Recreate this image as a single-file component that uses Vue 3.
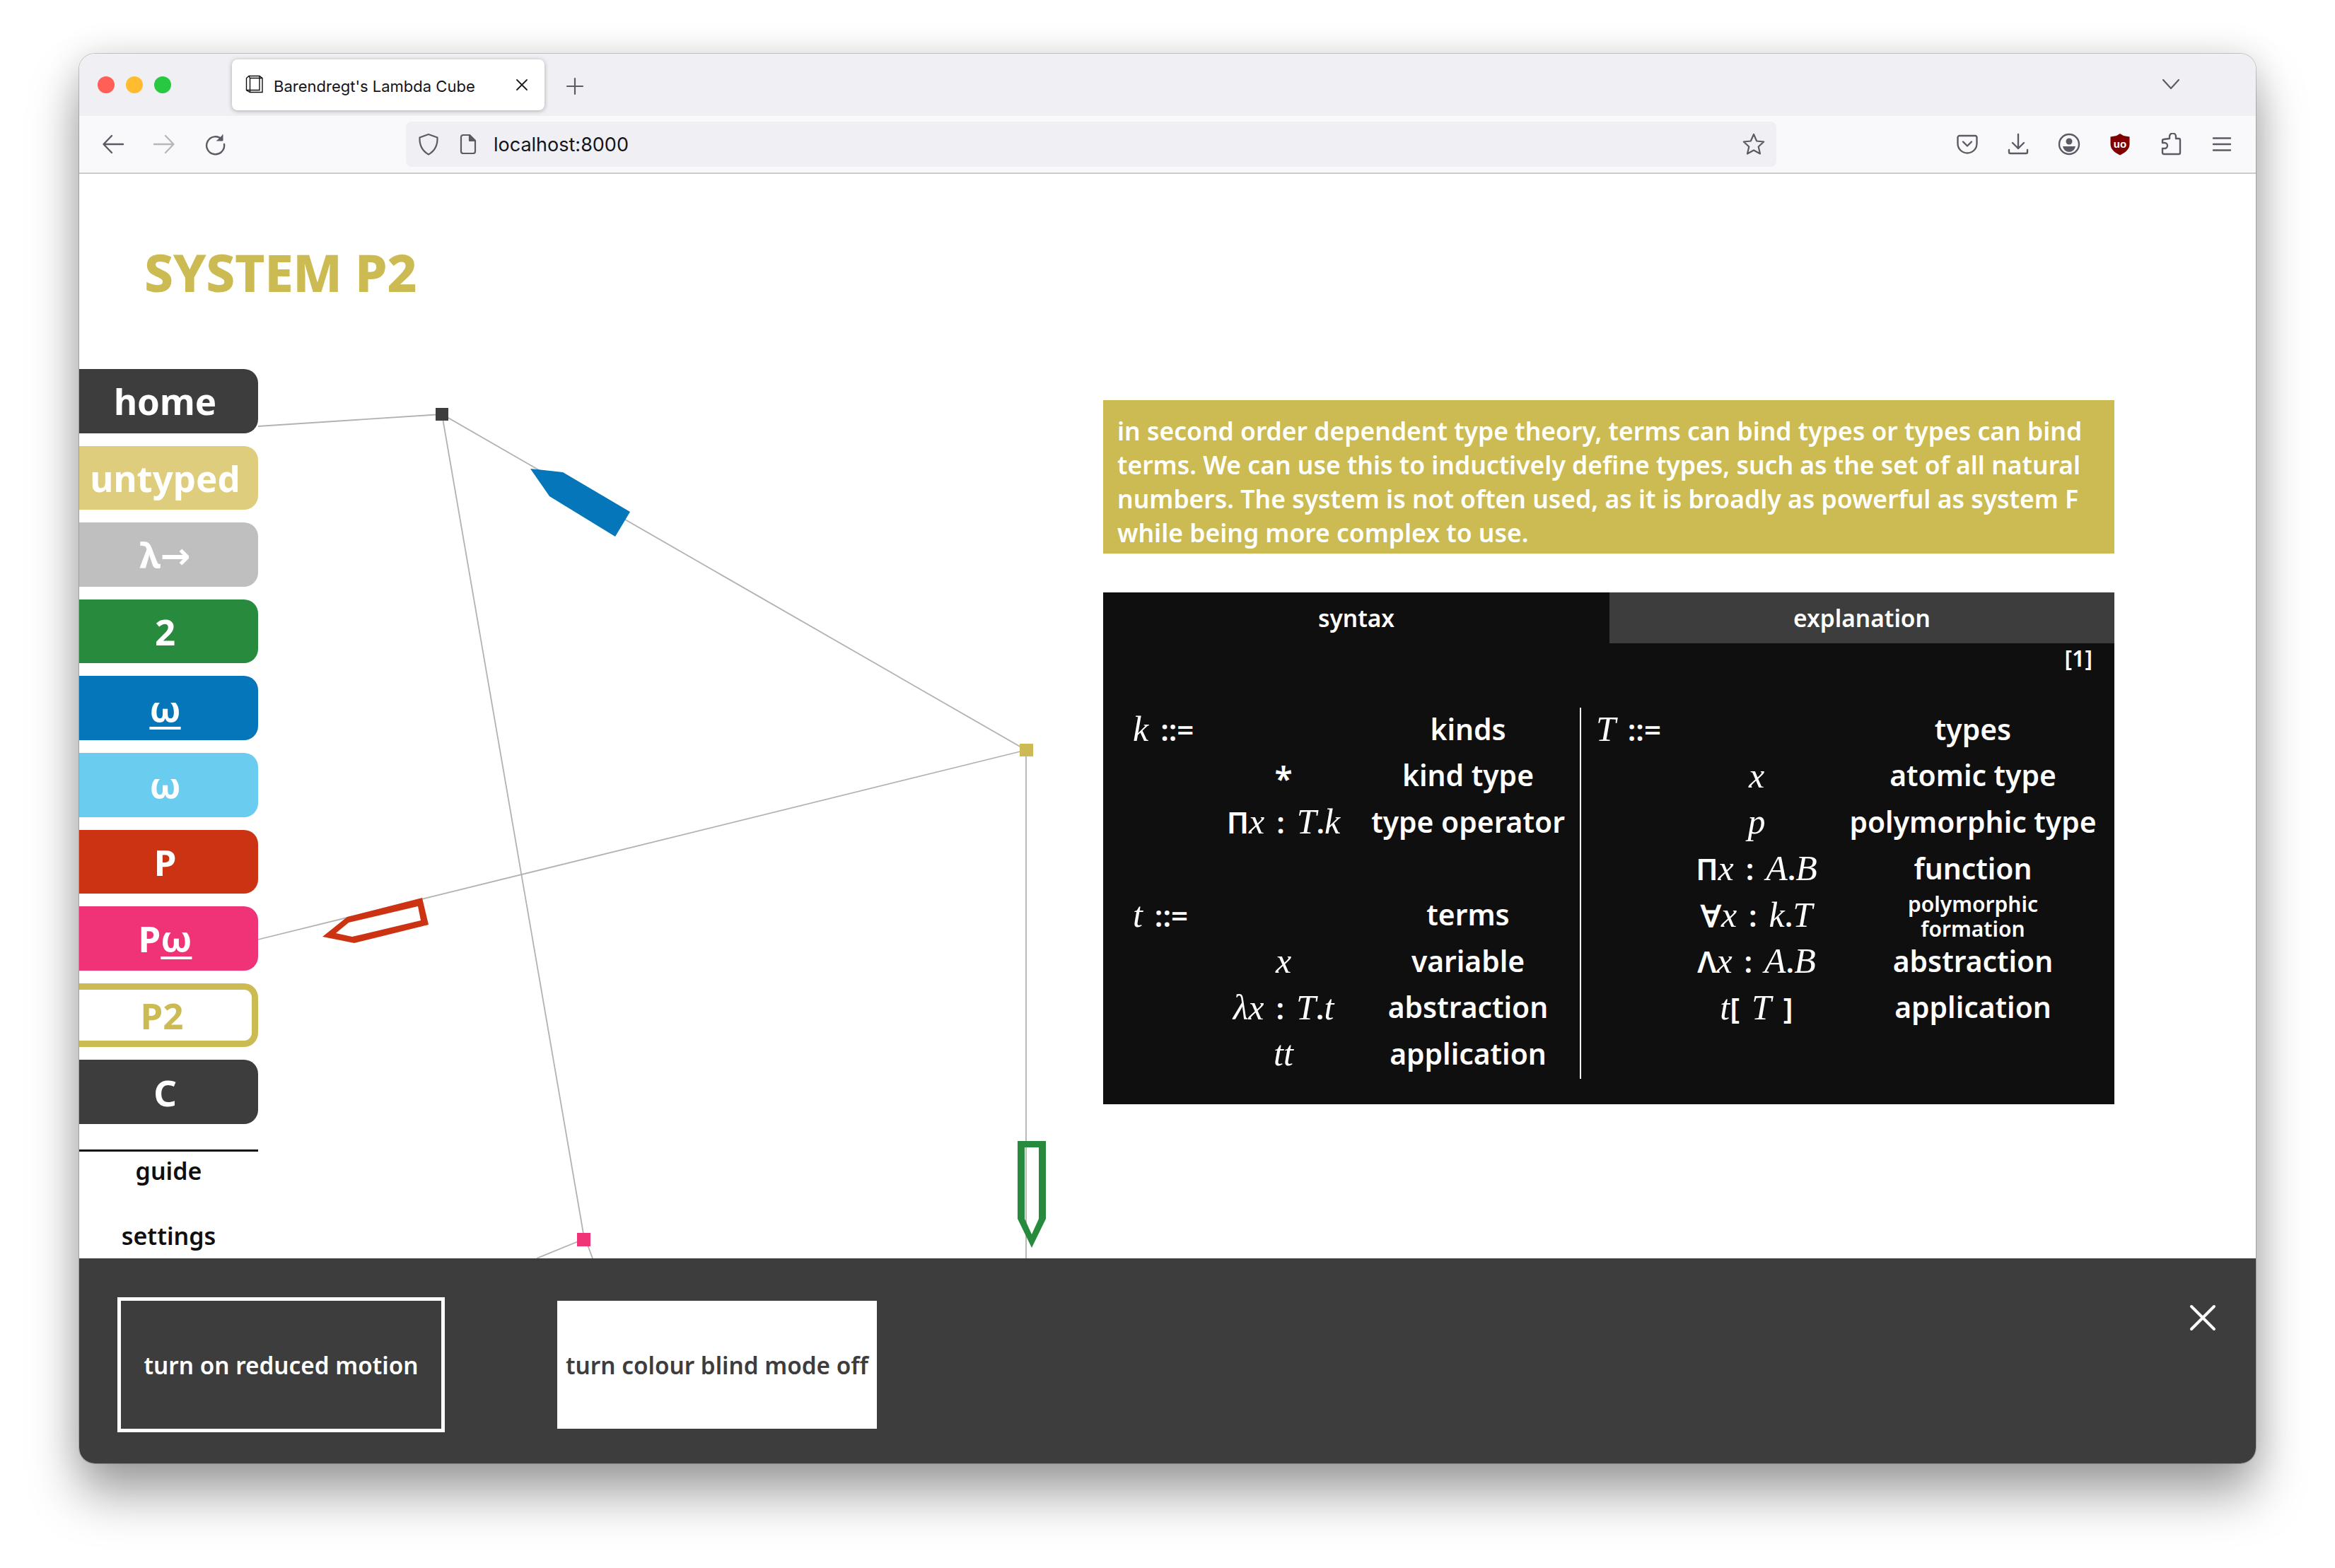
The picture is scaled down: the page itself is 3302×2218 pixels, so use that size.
<script setup>
const nav = [
  { t: 'home', c: 'dark' },
  { t: 'untyped', c: 'sand' },
  { t: 'λ→', c: 'grey' },
  { t: '2', c: 'green' },
  { t: 'ω', c: 'blue', u: true },
  { t: 'ω', c: 'sky' },
  { t: 'P', c: 'red' },
  { p: 'P', t: 'ω', c: 'pink', u: true },
  { t: 'P2', c: 'current' },
  { t: 'C', c: 'dark' },
]
const tok = (s) => s.split('').map((ch) => ({ ch, it: /[a-zA-Zλ]/.test(ch), star: ch === '*' }))
const build = (rows) => rows.map((r) => ({ ...r, a: tok(r[0]), b: tok(r[1]), d: r[2], small: r[3] }))
const left = build([
  ['k ::=', '', 'kinds'],
  ['', '*', 'kind type'],
  ['', 'Πx : T.k', 'type operator'],
  ['', '', ''],
  ['t ::=', '', 'terms'],
  ['', 'x', 'variable'],
  ['', 'λx : T.t', 'abstraction'],
  ['', 'tt', 'application'],
])
const right = build([
  ['T ::=', '', 'types'],
  ['', 'x', 'atomic type'],
  ['', 'p', 'polymorphic type'],
  ['', 'Πx : A.B', 'function'],
  ['', '∀x : k.T', 'polymorphic formation', true],
  ['', 'Λx : A.B', 'abstraction'],
  ['', 't[ T ]', 'application'],
  ['', '', ''],
])
const sections = [
  { cls: 'sec-left', rows: left },
  { cls: 'sec-right', rows: right },
]
</script>

<template>
  <div class="screen">
    <div class="window">
      <div class="tabbar">
        <div class="lights">
          <span class="light l-red"></span>
          <span class="light l-yellow"></span>
          <span class="light l-green"></span>
        </div>
        <div class="tab">
          <svg class="favicon" width="26" height="26" viewBox="0 0 26 26" fill="none" stroke="#111" stroke-width="1.4">
            <path d="M5 1.5h15l4 3v20H6.500l-5-3V4.500z" />
            <path d="M5 1.500l1.500 3H24M6.500 4.500v20M1.500 21.500H20V1.500" />
          </svg>
          <span class="tab-title">Barendregt's Lambda Cube</span>
          <svg class="tab-close" width="18" height="18" viewBox="0 0 18 18" fill="none" stroke="#1c1c22" stroke-width="1.800" stroke-linecap="round">
            <path d="M2 2l14 14M16 2L2 16" />
          </svg>
        </div>
        <svg class="newtab" width="28" height="28" viewBox="0 0 28 28" fill="none" stroke="#5b5b66" stroke-width="2.200" stroke-linecap="round">
          <path d="M14 3v22M3 14h22" />
        </svg>
        <svg class="chevron" width="28" height="16" viewBox="0 0 28 16" fill="none" stroke="#5b5b66" stroke-width="2.200" stroke-linecap="round" stroke-linejoin="round">
          <path d="M3 2l11 12L25 2" />
        </svg>
      </div>

      <div class="toolbar">
        <div class="tools">
          <svg width="32" height="32" viewBox="0 0 32 32" fill="none" stroke="#5b5b66" stroke-width="2.400" stroke-linecap="round" stroke-linejoin="round">
            <path d="M30 16H3M14 4L2.500 16 14 28" />
          </svg>
          <svg width="32" height="32" viewBox="0 0 32 32" fill="none" stroke="#b6b6bd" stroke-width="2.400" stroke-linecap="round" stroke-linejoin="round">
            <path d="M2 16h27M18 4l11.500 12L18 28" />
          </svg>
          <svg width="32" height="32" viewBox="0 0 32 32" fill="none" stroke="#5b5b66" stroke-width="2.400" stroke-linecap="round" stroke-linejoin="round">
            <path d="M26 9.500A12.500 12.500 0 1 0 29 16" />
            <path d="M27 2.500v8.500h-8.500" fill="#5b5b66" stroke-width="1" />
          </svg>
        </div>
        <div class="urlbar">
          <svg class="u-shield" width="30" height="32" viewBox="0 0 30 32" fill="none" stroke="#5b5b66" stroke-width="2.200" stroke-linejoin="round">
            <path d="M15 2l12.500 4.500c.5 10-2 18-12.500 24C4.500 24.500 2 16.500 2.500 6.500z" />
          </svg>
          <svg class="u-doc" width="24" height="28" viewBox="0 0 24 28" fill="none" stroke="#5b5b66" stroke-width="2.200" stroke-linejoin="round">
            <path d="M2 4a3 3 0 0 1 3-3h9l8 8v15a3 3 0 0 1-3 3H5a3 3 0 0 1-3-3z" />
            <path d="M14 1v8h8z" fill="#5b5b66" />
          </svg>
          <span class="url">localhost:8000</span>
          <svg class="u-star" width="32" height="32" viewBox="0 0 32 32" fill="none" stroke="#5b5b66" stroke-width="2.200" stroke-linejoin="round">
            <path d="M16 2l4.200 9.500 10 1-7.500 7 2.300 10L16 24.500 7 29.500l2.300-10-7.500-7 10-1z" />
          </svg>
        </div>
        <div class="tools tools-right">
          <svg width="32" height="32" viewBox="0 0 32 32" fill="none" stroke="#5b5b66" stroke-width="2.400" stroke-linecap="round" stroke-linejoin="round">
            <path d="M5 4h22a2.500 2.500 0 0 1 2.500 2.500V15c0 8-6.500 13.500-13.500 13.500S2.500 23 2.500 15V6.500A2.500 2.500 0 0 1 5 4z" />
            <path d="M10 12.500l6 6 6-6" />
          </svg>
          <svg width="32" height="32" viewBox="0 0 32 32" fill="none" stroke="#5b5b66" stroke-width="2.400" stroke-linecap="round" stroke-linejoin="round">
            <path d="M16 2v20M8 14l8 8 8-8M3 24v3a2 2 0 0 0 2 2h22a2 2 0 0 0 2-2v-3" />
          </svg>
          <svg width="32" height="32" viewBox="0 0 32 32" fill="none" stroke="#5b5b66" stroke-width="2.400">
            <circle cx="16" cy="16" r="14" />
            <circle cx="16" cy="12" r="4.500" fill="#5b5b66" stroke="none" />
            <path d="M7 19h18c-1 5-5 8-9 8s-8-3-9-8z" fill="#5b5b66" stroke="none" />
          </svg>
          <svg width="32" height="32" viewBox="0 0 32 32">
            <path d="M16 1l5 3 8.500 1.500V16c0 7-6 12-13.500 15.500C8.500 28 2.500 23 2.500 16V5.500L11 4z" fill="#800000" />
            <text x="16" y="21" text-anchor="middle" class="ub">uo</text>
          </svg>
          <svg width="32" height="32" viewBox="0 0 32 32" fill="none" stroke="#5b5b66" stroke-width="2.400" stroke-linejoin="round">
            <path d="M14 9V6a4.500 4.500 0 0 1 9 0v3h4a2 2 0 0 1 2 2v18a2 2 0 0 1-2 2H6a2 2 0 0 1-2-2v-6h3a4 4 0 0 0 0-8H4v-3a2 2 0 0 1 2-2z" transform="translate(0 -1)" />
          </svg>
          <svg width="32" height="32" viewBox="0 0 32 32" fill="none" stroke="#5b5b66" stroke-width="2.400" stroke-linecap="round">
            <path d="M4 7.500h24M4 16h24M4 24.500h24" />
          </svg>
        </div>
      </div>

      <div class="page">
        <svg class="graph" width="3078" height="1534" viewBox="112 246 3078 1534" fill="none">
          <g stroke="#b2b2b2" stroke-width="1.800">
            <path d="M365 603L625 586L1451 1061L1451 1780" />
            <path d="M625 586L825 1745L838 1780" />
            <path d="M365 1329L1451 1061" />
            <path d="M825 1753L759 1780" />
          </g>
          <rect x="616" y="577" width="18" height="18" fill="#3d3d3d" />
          <rect x="1442" y="1052" width="19" height="18" fill="#cbbb52" />
          <rect x="816" y="1744" width="19" height="19" fill="#f03377" />
          <polygon points="750,663 796,668 891,724 870,759 777,702" fill="#0476b9" />
          <path fill-rule="evenodd" fill="#cb3313" d="M456 1325L491 1297L597 1270L606 1308L501 1334ZM475 1320L498 1325L595 1302L591 1282L493 1305Z" />
          <path fill-rule="evenodd" fill="#288a3d" d="M1439 1614H1479V1724L1459 1765L1439 1724ZM1449 1623V1724L1459 1746L1469 1724V1623Z" />
        </svg>

        <h1 class="title">SYSTEM P2</h1>

        <div class="main">
          <nav class="side">
            <a v-for="(n, i) in nav" :key="i" class="navbtn" :class="n.c">
              {{ n.p }}<span :class="{ under: n.u }">{{ n.t }}</span>
            </a>
            <div class="rule"></div>
            <a class="plain">guide</a>
            <a class="plain">settings</a>
          </nav>

          <section class="content">
            <p class="blurb">
              in second order dependent type theory, terms can bind types or types can bind<br />
              terms. We can use this to inductively define types, such as the set of all natural<br />
              numbers. The system is not often used, as it is broadly as powerful as system F<br />
              while being more complex to use.
            </p>
            <div class="card">
              <div class="tabs">
                <div class="t-tab">syntax</div>
                <div class="t-tab inactive">explanation</div>
              </div>
              <div class="ref">[1]</div>
              <div class="sections">
                <div v-for="s in sections" :key="s.cls" class="sec" :class="s.cls">
                  <template v-for="(r, i) in s.rows" :key="i">
                    <div class="m head"><span v-for="(k, j) in r.a" :key="j" :class="{ it: k.it }">{{ k.ch }}</span></div>
                    <div class="m mid"><span v-for="(k, j) in r.b" :key="j" :class="{ it: k.it, star: k.star }">{{ k.ch }}</span></div>
                    <div class="d" :class="{ small: r.small }">{{ r.d }}</div>
                  </template>
                </div>
              </div>
            </div>
          </section>
        </div>
      </div>

      <div class="panel">
        <button class="opt outline">turn on reduced motion</button>
        <button class="opt filled">turn colour blind mode off</button>
        <svg class="x" width="38" height="38" viewBox="0 0 38 38" fill="none" stroke="#fff" stroke-width="4" stroke-linecap="round">
          <path d="M3 3l32 32M35 3L3 35" />
        </svg>
      </div>
    </div>
  </div>
</template>

<style>
html, body { margin: 0; background: #fff; }
</style>

<style scoped>
.screen {
  width: 3302px;
  height: 2218px;
  padding: 76px 112px 148px;
  box-sizing: border-box;
  overflow: hidden;
  font-family: "Noto Sans", sans-serif;
}
.window {
  height: 100%;
  display: flex;
  flex-direction: column;
  border-radius: 22px;
  overflow: hidden;
  background: #fff;
  box-shadow: 0 0 0 1px rgba(0, 0, 0, .18), 0 44px 70px rgba(0, 0, 0, .36), 0 0 50px rgba(0, 0, 0, .12);
}
.tabbar {
  height: 88px;
  flex: none;
  box-sizing: border-box;
  padding: 8px 106px 8px 26px;
  background: #f0f0f4;
  display: flex;
  align-items: center;
}
.lights { display: flex; gap: 16px; }
.light { width: 24px; height: 24px; border-radius: 50%; }
.l-red { background: #ff5f57; }
.l-yellow { background: #febc2e; }
.l-green { background: #28c840; }
.tab {
  margin-left: 86px;
  width: 442px;
  height: 72px;
  box-sizing: border-box;
  padding: 0 23px 0 19px;
  background: #fff;
  border-radius: 8px;
  box-shadow: 0 1px 6px rgba(0, 0, 0, .3);
  display: flex;
  align-items: center;
  gap: 14px;
}
.favicon { flex: none; margin-top: -2px; }
.tab-title { font: 22px/1 Inter, sans-serif; color: #15141a; white-space: nowrap; margin-top: 3px; }
.tab-close { margin-left: auto; flex: none; }
.newtab { margin-left: 29px; margin-top: 4px; }
.chevron { margin-left: auto; margin-top: -2px; }

.toolbar {
  height: 82px;
  flex: none;
  box-sizing: border-box;
  padding: 0 32px;
  background: #f9f9fb;
  border-bottom: 2px solid #ccc;
  display: flex;
  align-items: center;
}
.tools { display: flex; gap: 40px; flex: none; }
.urlbar {
  margin-left: 254px;
  width: 1938px;
  height: 64px;
  flex: none;
  box-sizing: border-box;
  padding: 0 16px 0 17px;
  background: #f0f0f4;
  border-radius: 8px;
  display: flex;
  align-items: center;
}
.u-doc { margin-left: 29px; }
.url { margin-left: 24px; font: 27px/1 Inter, sans-serif; color: #15141a; }
.u-star { margin-left: auto; }
.tools-right { margin-left: 254px; }
.ub { font: 700 15px "Liberation Sans", sans-serif; fill: #fff; }

.page {
  position: relative;
  flex: 1;
  min-height: 0;
  overflow: hidden;
  background: #fff;
}
.graph { position: absolute; left: 0; top: 0; }
.title {
  position: relative;
  margin: 0;
  height: 276px;
  box-sizing: border-box;
  padding: 94px 0 0 92px;
  font-size: 73px;
  line-height: 90px;
  font-weight: 800;
  letter-spacing: -.4px;
  color: #cbbb52;
}
.main { position: relative; display: flex; align-items: flex-start; }
.side { width: 253px; flex: none; display: flex; flex-direction: column; gap: 18px; }
.navbtn {
  height: 90.600px;
  box-sizing: border-box;
  padding-right: 10px;
  border-radius: 0 20px 20px 0;
  display: flex;
  align-items: center;
  justify-content: center;
  font-family: "Noto Sans", "DejaVu Sans", sans-serif;
  font-size: 51px;
  font-weight: 700;
  color: #fff;
  white-space: pre;
}
.under { text-decoration: underline; text-underline-offset: 6px; text-decoration-thickness: 4px; }
.dark { background: #3d3d3d; }
.sand { background: #dfcd7e; }
.grey { background: #bfbfbf; }
.green { background: #288a3d; }
.blue { background: #0476b9; }
.sky { background: #6acdf0; }
.red { background: #cb3313; }
.pink { background: #f03377; }
.current {
  background: #fff;
  border: 9px solid #cbbb52;
  border-left: 0;
  color: #cbbb52;
}
.rule { height: 3px; background: #0f0f0f; margin-top: 18px; margin-bottom: -28px; }
.plain {
  height: 74px;
  display: flex;
  align-items: center;
  justify-content: center;
  font-size: 34px;
  font-weight: 600;
  color: #0f0f0f;
}
.content { margin-left: 1195px; margin-top: 44px; width: 1430px; flex: none; }
.blurb {
  margin: 0;
  height: 217px;
  box-sizing: border-box;
  padding: 19px 20px 0;
  background: #cbbb52;
  color: #fff;
  font-size: 35.500px;
  line-height: 48px;
  font-weight: 600;
  white-space: nowrap;
}
.card {
  margin-top: 55px;
  height: 724px;
  background: #0f0f0f;
  color: #fff;
}
.tabs { display: flex; height: 72px; }
.t-tab {
  flex: 1;
  display: flex;
  align-items: center;
  justify-content: center;
  font-size: 33.500px;
  font-weight: 600;
}
.t-tab.inactive { background: #3d3d3d; }
.t-tab:first-child { flex: 0 0 716px; }
.ref { height: 91px; padding: 3px 31px 0 0; box-sizing: border-box; text-align: right; font-size: 32px; font-weight: 600; line-height: 36px; }
.sections { display: flex; }
.sec {
  display: grid;
  grid-auto-rows: 65.600px;
  align-items: center;
  box-sizing: border-box;
  height: 525px;
}
.sec-left {
  width: 676px;
  padding-left: 42px;
  border-right: 2px solid #fff;
  grid-template-columns: 123px 180px 318px;
}
.sec-left .d { padding-left: 24px; }
.sec-right {
  padding-left: 21px;
  grid-template-columns: 115px 224px 378px;
}
.sec-right .d { padding-left: 10px; }
.m { font-size: 42px; font-weight: 600; white-space: pre; line-height: 1; word-spacing: 6px; padding-bottom: 5px; }
.mid { text-align: center; }
.it { font-family: "Liberation Serif", serif; font-style: italic; font-weight: 400; font-size: 50px; }
.star { font-size: 46px; vertical-align: -12px; }
.d { text-align: center; font-size: 40.800px; font-weight: 600; line-height: 1; white-space: nowrap; padding-bottom: 5px; }
.d.small { font-size: 30px; line-height: 35px; white-space: normal; padding: 0 50px 0 60px !important; }
.panel {
  height: 290px;
  flex: none;
  box-sizing: border-box;
  padding: 11px 56px 0 54px;
  background: #3d3d3d;
  display: flex;
  align-items: center;
}
.opt {
  font-family: "Noto Sans", sans-serif;
  font-size: 33.300px;
  font-weight: 600;
  padding: 0;
  border-radius: 0;
  white-space: nowrap;
}
.outline { width: 463px; height: 191px; background: #3d3d3d; border: 5px solid #fff; color: #fff; }
.filled { width: 452px; height: 181px; margin-left: 159px; background: #fff; border: 0; color: #3d3d3d; }
.x { margin-left: auto; align-self: flex-start; margin-top: 54px; }
</style>
